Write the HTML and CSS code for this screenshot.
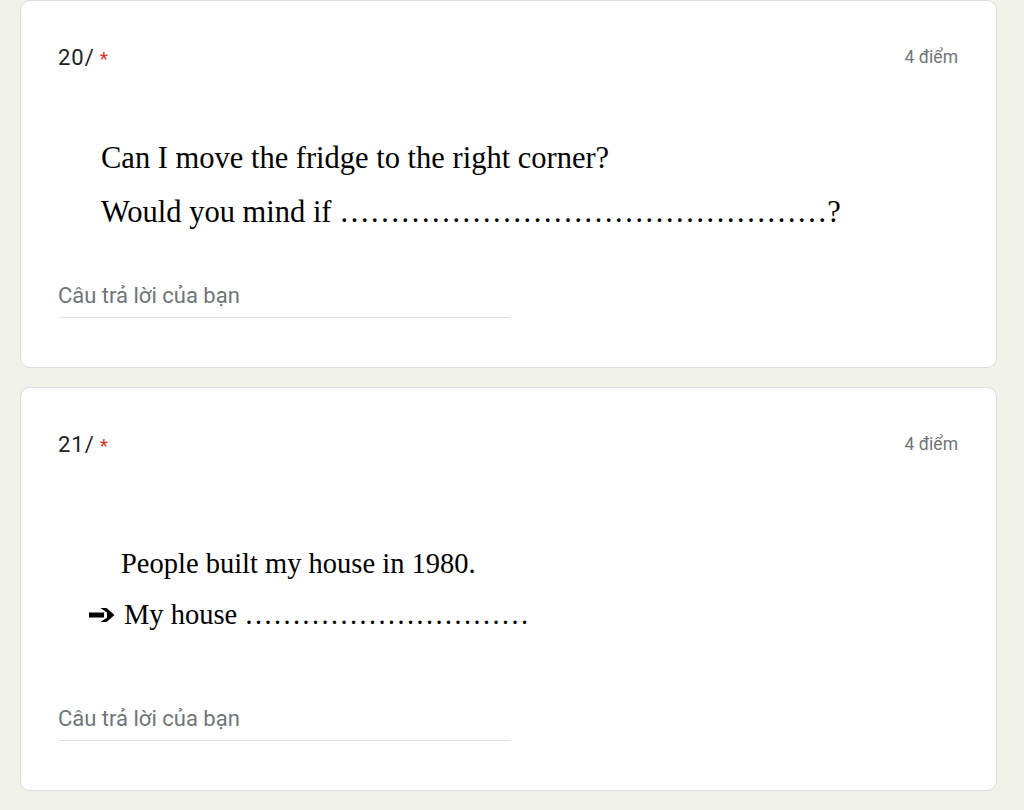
FILE: index.html
```html
<!DOCTYPE html>
<html lang="vi">
<head>
<meta charset="utf-8">
<link rel="stylesheet" href="styles.css">
</head>
<body>
<div class="page">
  <div class="card">
    <div class="q-head">
      <div class="q-title">20/<span class="req">*</span></div>
      <div class="q-points">4 điểm</div>
    </div>
    <div class="q-body q-body-a">
      <p class="line">Can I move the fridge to the right corner?</p>
      <p class="line">Would you mind if …………………………………………?</p>
    </div>
    <div class="answer">
      <div class="placeholder">Câu trả lời của bạn</div>
    </div>
  </div>
  <div class="card">
    <div class="q-head">
      <div class="q-title">21/<span class="req">*</span></div>
      <div class="q-points">4 điểm</div>
    </div>
    <div class="q-body q-body-b">
      <p class="line line-indent">People built my house in 1980.</p>
      <p class="line line-arrow"><svg class="arrow" width="26" height="14" viewBox="0 0 26 14"><path d="M0 4.5H15V9.5H0Z" fill="#000"/><path d="M11.5 0H17.5L25.5 7L17.5 14H11.5L18 9.5V4.5Z" fill="#000"/></svg>My house …………………………</p>
    </div>
    <div class="answer">
      <div class="placeholder">Câu trả lời của bạn</div>
    </div>
  </div>
</div>
</body>
</html>
```

FILE: styles.css
```css
html, body {
  margin: 0;
  padding: 0;
  background: #f1f2e8;
}
.page {
  display: flex;
  flex-direction: column;
  gap: 19px;
  padding: 0 27px 0 20px;
}
.card {
  background: #fff;
  border: 1px solid #dadce0;
  border-radius: 10px;
  padding: 0 38px;
  box-sizing: border-box;
}
.q-head {
  display: flex;
  justify-content: space-between;
  align-items: center;
  height: 24px;
  margin-top: 44px;
}
.q-title {
  font-family: Roboto, "Open Sans", sans-serif;
  font-size: 22px;
  letter-spacing: 1px;
  color: #202124;
  padding-left: 0;
  margin-left: -1px;
}
.req {
  color: #d93025;
  font-size: 19px;
  letter-spacing: 0;
  margin-left: 5px;
}
.q-points {
  font-family: Roboto, sans-serif;
  font-size: 17.5px;
  color: #70757a;
}
.q-body {
  font-family: "Liberation Serif", "Times New Roman", serif;
  color: #000;
}
.q-body-a {
  font-size: 30.5px;
  padding: 75px 0 1px 42px;
}
.q-body-b {
  font-size: 28.5px;
  padding: 94px 0 24px 30px;
}
.line {
  margin: 0 0 26px;
  line-height: 28px;
}
.q-body-b .line { margin-bottom: 23px; }
.line-indent { padding-left: 32px; }
.line-arrow {
  display: flex;
  align-items: center;
  gap: 9px;
}
.answer {
  width: 451px;
  border-bottom: 1px solid #e0e0e0;
  padding: 31px 0 9px;
  margin-bottom: 49px;
}
.placeholder {
  font-family: Roboto, sans-serif;
  font-size: 22px;
  color: #70757a;
  line-height: 24px;
  margin-left: -1px;
}
```
